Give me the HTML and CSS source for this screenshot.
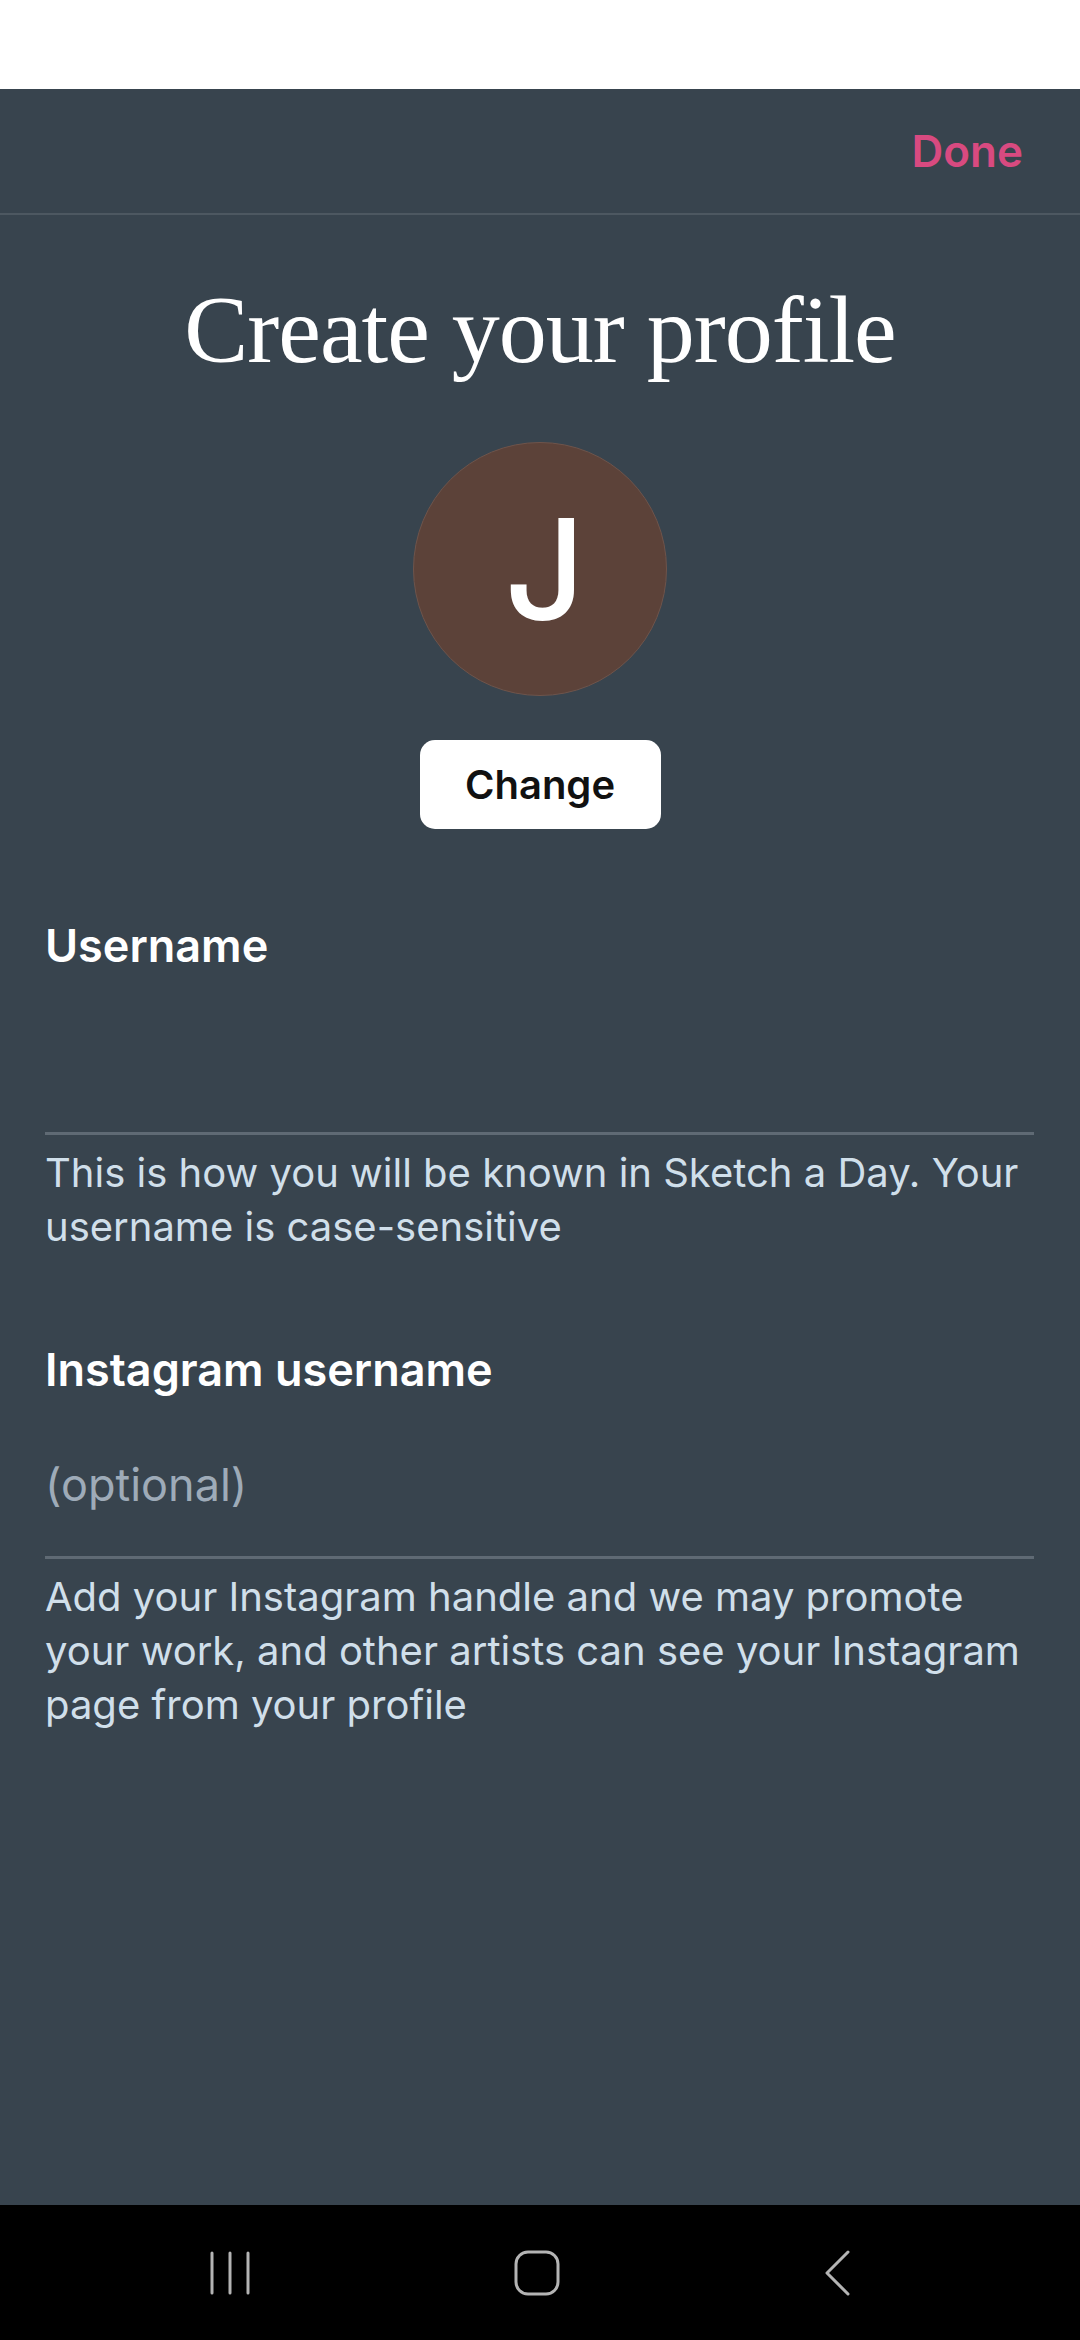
FILE: index.html
```html
<!DOCTYPE html>
<html lang="en">
<head>
<meta charset="utf-8">
<title>Create your profile</title>
<link rel="stylesheet" href="styles.css">
</head>
<body>
<div class="status-bar"></div>
<header class="top-bar">
  <button class="done-btn" type="button">Done</button>
</header>
<main class="content">
  <h1 class="title">Create your profile</h1>
  <div class="avatar">J</div>
  <button class="change-btn" type="button">Change</button>

  <section class="field field-first">
    <label class="field-label" for="username">Username</label>
    <input class="field-input" id="username" type="text">
    <p class="field-help">This is how you will be known in Sketch a Day. Your username is case-sensitive</p>
  </section>

  <section class="field">
    <label class="field-label" for="insta">Instagram username</label>
    <input class="field-input" id="insta" type="text" placeholder="(optional)">
    <p class="field-help">Add your Instagram handle and we may promote your work, and other artists can see your Instagram page from your profile</p>
  </section>
</main>
<nav class="nav-bar">
  <svg class="nav-icon" width="44" height="46" viewBox="0 0 44 46" aria-hidden="true">
    <g stroke="#b4b4b4" stroke-width="3" stroke-linecap="round" fill="none">
      <line x1="4" y1="3" x2="4" y2="43"/>
      <line x1="22" y1="3" x2="22" y2="43"/>
      <line x1="40" y1="3" x2="40" y2="43"/>
    </g>
  </svg>
  <svg class="nav-icon" width="46" height="46" viewBox="0 0 46 46" aria-hidden="true">
    <rect x="2" y="2" width="42" height="42" rx="12" ry="12" stroke="#b4b4b4" stroke-width="3" fill="none"/>
  </svg>
  <svg class="nav-icon" width="30" height="48" viewBox="0 0 30 48" aria-hidden="true">
    <polyline points="26,3 5,24 26,45" stroke="#b4b4b4" stroke-width="3" stroke-linecap="round" stroke-linejoin="round" fill="none"/>
  </svg>
</nav>
</body>
</html>
```

FILE: styles.css
```css
* {
  box-sizing: border-box;
}

html, body {
  margin: 0;
  padding: 0;
}

body {
  width: 1080px;
  height: 2340px;
  display: flex;
  flex-direction: column;
  background: #38444e;
  font-family: Inter, "Noto Sans", sans-serif;
  overflow: hidden;
}

.status-bar {
  height: 89px;
  background: #ffffff;
  flex: none;
}

.top-bar {
  height: 126px;
  flex: none;
  display: flex;
  align-items: center;
  justify-content: flex-end;
  padding: 0 57px 0 0;
  border-bottom: 2px solid #4d5861;
}

.done-btn {
  background: none;
  border: 0;
  padding: 0;
  font-family: Inter, sans-serif;
  font-size: 44px;
  font-weight: 600;
  color: #d84a80;
  line-height: normal;
}

.content {
  flex: 1;
  display: flex;
  flex-direction: column;
  align-items: center;
}

.title {
  margin: 57px 0 0;
  font-family: "Liberation Serif", "Times New Roman", serif;
  font-weight: 400;
  font-size: 96px;
  letter-spacing: -1px;
  line-height: 115px;
  color: #ffffff;
  text-align: center;
}

.avatar {
  margin-top: 55px;
  width: 254px;
  height: 254px;
  border-radius: 50%;
  background: #5c4239;
  border: 1px solid #6e544b;
  display: flex;
  align-items: center;
  justify-content: center;
  padding-left: 10px;
  color: #ffffff;
  font-family: Inter, sans-serif;
  font-size: 140px;
  font-weight: 450;
  line-height: normal;
}

.change-btn {
  margin-top: 44px;
  width: 241px;
  height: 89px;
  border: 0;
  border-radius: 15px;
  background: #ffffff;
  color: #111111;
  font-family: Inter, sans-serif;
  font-size: 40px;
  font-weight: 600;
  padding: 0;
}

.field {
  align-self: stretch;
  padding: 0 46px 0 45px;
  margin-top: 91px;
  display: flex;
  flex-direction: column;
}

.field-first {
  margin-top: 92px;
}

.field-label {
  font-size: 45px;
  font-weight: 600;
  line-height: 50px;
  color: #ffffff;
}

.field-input {
  display: block;
  width: 100%;
  height: 164px;
  margin: 0;
  padding: 66px 0 49px;
  border: 0;
  border-bottom: 3px solid #5f6a74;
  background: transparent;
  font-family: Inter, sans-serif;
  font-size: 45px;
  line-height: 46px;
  color: #ffffff;
  outline: none;
}

.field-input::placeholder {
  color: #9eabb8;
  opacity: 1;
}

.field-help {
  margin: 11px 0 0;
  font-size: 40px;
  line-height: 54px;
  color: #d0dfea;
}

.nav-bar {
  height: 135px;
  flex: none;
  background: #000000;
  display: flex;
  align-items: center;
  justify-content: center;
  gap: 262px;
  padding-right: 20px;
}

.nav-icon {
  display: block;
}
```
